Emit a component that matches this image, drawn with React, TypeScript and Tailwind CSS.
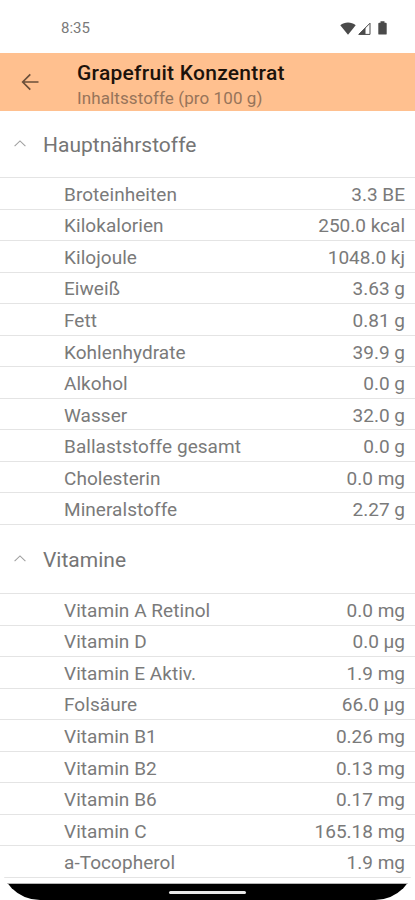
interface Nutrient {
  name: string;
  value: string;
}

interface Section {
  title: string;
  items: Nutrient[];
}

const sections: Section[] = [
  {
    title: "Hauptnährstoffe",
    items: [
      { name: "Broteinheiten", value: "3.3 BE" },
      { name: "Kilokalorien", value: "250.0 kcal" },
      { name: "Kilojoule", value: "1048.0 kj" },
      { name: "Eiweiß", value: "3.63 g" },
      { name: "Fett", value: "0.81 g" },
      { name: "Kohlenhydrate", value: "39.9 g" },
      { name: "Alkohol", value: "0.0 g" },
      { name: "Wasser", value: "32.0 g" },
      { name: "Ballaststoffe gesamt", value: "0.0 g" },
      { name: "Cholesterin", value: "0.0 mg" },
      { name: "Mineralstoffe", value: "2.27 g" },
    ],
  },
  {
    title: "Vitamine",
    items: [
      { name: "Vitamin A Retinol", value: "0.0 mg" },
      { name: "Vitamin D", value: "0.0 µg" },
      { name: "Vitamin E Aktiv.", value: "1.9 mg" },
      { name: "Folsäure", value: "66.0 µg" },
      { name: "Vitamin B1", value: "0.26 mg" },
      { name: "Vitamin B2", value: "0.13 mg" },
      { name: "Vitamin B6", value: "0.17 mg" },
      { name: "Vitamin C", value: "165.18 mg" },
      { name: "a-Tocopherol", value: "1.9 mg" },
    ],
  },
];

function StatusBar() {
  return (
    <div className="flex h-[53px] shrink-0 items-center justify-between pt-[3px] pr-[28px] pl-[61px]">
      <span className="text-[15px] text-[#7a7a7a]">8:35</span>
      <div className="flex items-center text-[#4a4a4a]">
        <svg className="h-[13px] w-4" viewBox="0 0 16 13" fill="currentColor">
          <path d="M0.3 3.2C4.6-0.5 11.4-0.5 15.7 3.2L8 12.8z" />
        </svg>
        <svg className="ml-[2px] h-[13px] w-[13px]" viewBox="0 0 13 13">
          <path d="M0.8 12.4L12 1.2V12.4z" fill="none" stroke="currentColor" />
          <path d="M0.5 12.5L7.5 5.5V12.5z" fill="currentColor" />
        </svg>
        <svg className="ml-[7px] h-[14px] w-[9px]" viewBox="0 0 9 14" fill="currentColor">
          <path d="M2.5 0.3h4v1.5h1.3q0.9 0 0.9 0.9v10q0 0.9-0.9 0.9H1.2q-0.9 0-0.9-0.9v-10q0-0.9 0.9-0.9h1.3z" />
        </svg>
      </div>
    </div>
  );
}

function AppBar() {
  return (
    <header className="flex h-[58px] shrink-0 items-center bg-[#ffc08f] pl-[21px]">
      <button type="button" aria-label="Zurück" className="w-14 text-[#6b4f3a]">
        <svg className="h-[18px] w-[18px]" viewBox="0 0 18 18" fill="none" stroke="currentColor" strokeWidth="1.7">
          <path d="M17.5 9H2M9.3 1.4L1.7 9l7.6 7.6" />
        </svg>
      </button>
      <div className="pt-[6px]">
        <h1 className="text-[21px] leading-[26px] font-medium tracking-[0.27px] text-[#1c120b]">Grapefruit Konzentrat</h1>
        <p className="text-[17px] leading-[25px] tracking-[0.1px] text-[#97745a]">Inhaltsstoffe (pro 100 g)</p>
      </div>
    </header>
  );
}

function SectionHeader({ title }: { title: string }) {
  return (
    <div className="flex h-full items-center pt-[3px] pl-[14px]">
      <svg className="-mt-1 h-[7px] w-3" viewBox="0 0 12 7" fill="none" stroke="#a0a0a0" strokeWidth="1.1">
        <path d="M0.6 6.2L6 0.9l5.4 5.3" />
      </svg>
      <h2 className="ml-[17px] text-[21px] text-[#757575]">{title}</h2>
    </div>
  );
}

function NutrientRow({ name, value }: Nutrient) {
  return (
    <li className="flex h-[31.55px] items-center justify-between border-b border-[#e4e4e4] pt-[3px] pr-[10px] pl-16 text-[19px] leading-6 text-[#7a7a7a]">
      <span className="tracking-[0.05px]">{name}</span>
      <span>{value}</span>
    </li>
  );
}

export default function App() {
  const [main, vitamins] = sections;

  return (
    <div className="flex h-[900px] w-[415px] flex-col overflow-hidden rounded-b-[40px] bg-white font-[Roboto,sans-serif]">
      <StatusBar />
      <AppBar />
      <main className="h-[772px] shrink-0 overflow-hidden">
        <section>
          <div className="h-[67px] border-b border-[#e4e4e4]">
            <SectionHeader title={main.title} />
          </div>
          <ul>
            {main.items.map((item) => (
              <NutrientRow key={item.name} {...item} />
            ))}
          </ul>
        </section>
        <section>
          <div className="h-[69px] border-b border-[#e4e4e4]">
            <SectionHeader title={vitamins.title} />
          </div>
          <ul>
            {vitamins.items.map((item) => (
              <NutrientRow key={item.name} {...item} />
            ))}
          </ul>
        </section>
      </main>
      {/* gesture navigation bar */}
      <div className="flex h-[17px] shrink-0 justify-center border-t border-[#b5b5b5] bg-black pt-[7px]">
        <div className="h-[3px] w-[77px] rounded-full bg-[#e8e8e8]" />
      </div>
    </div>
  );
}
